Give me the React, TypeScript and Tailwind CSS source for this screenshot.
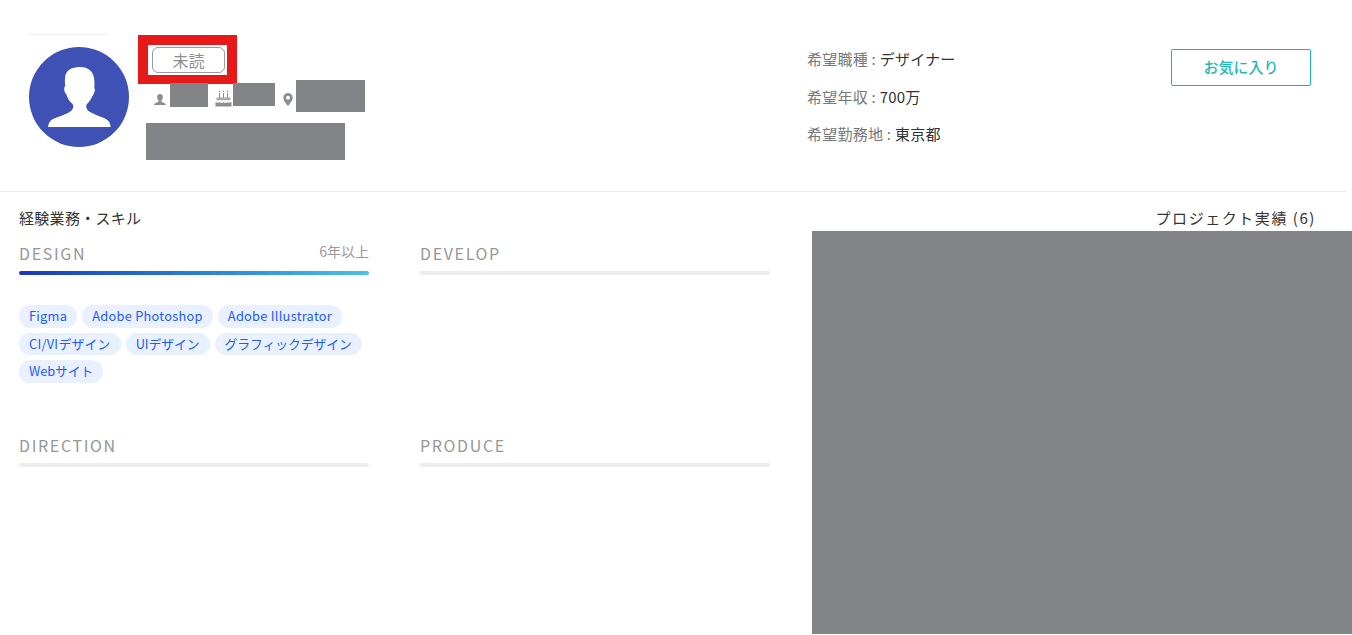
const font = '[font-family:"Noto_Sans_CJK_JP","Noto_Sans",sans-serif]';

function UserIcon() {
  return (
    <svg viewBox="0 0 14 14" className="h-[14px] w-[14px]" fill="#8d8e90">
      <path d="M7 1c1.800 0 2.900 1.300 2.900 3.100 0 1.400-.6 2.700-1.400 3.400v1.200c.8.6 4.300 1 4.500 3.300H1c.2-2.300 3.700-2.700 4.500-3.300V7.500C4.700 6.800 4.100 5.500 4.100 4.100 4.100 2.300 5.200 1 7 1z" />
    </svg>
  );
}

function CakeIcon() {
  return (
    <svg viewBox="0 0 17 17" className="h-[17px] w-[17px]" fill="#8d8e90">
      <path d="M4.500 0l.7 1.400-.7 1-.7-1zM8.500 0l.7 1.400-.7 1-.7-1zM12.500 0l.7 1.400-.7 1-.7-1z" />
      <path d="M4 3h1v5H4zM8 3h1v5H8zM12 3h1v5h-1z" />
      <path d="M1.500 7.500h14v2.300c-1.200 1-2.300 1-3.500 0-1.200 1-2.300 1-3.500 0-1.200 1-2.300 1-3.500 0-1.200 1-2.300 1-3.500 0z" opacity=".75" />
      <path d="M.5 12c1.600.9 3.200.9 4 .2 1.300.9 2.700.9 4 0 1.300.9 2.700.9 4 0 .8.700 2.400.7 4-.2v4.500H.5z" />
    </svg>
  );
}

function PinIcon() {
  return (
    <svg viewBox="0 0 12 16" className="h-[15px] w-3" fill="#8d8e90">
      <path
        fillRule="evenodd"
        d="M6 1a5 5 0 0 1 5 5c0 3.200-3.300 6.700-5 9-1.700-2.300-5-5.800-5-9a5 5 0 0 1 5-5zm0 3a2 2 0 1 0 0 4 2 2 0 0 0 0-4z"
      />
    </svg>
  );
}

function AvatarIcon() {
  return (
    <svg viewBox="0 0 100 100" className="h-[100px] w-[100px]">
      <circle cx="50" cy="50" r="50" fill="#3f51b5" />
      <path
        fill="#fff"
        d="M51 20c8 0 13 4 14 11 .7 4 .6 7 .2 10 1 .8 1 3-.2 5-.5 1.600-1 2.800-2 3.600-1 3-2.500 5.400-5 7.400-1.500 1.600-1 4.600 1 6.400 5 4.400 15 6 20 10 1.600 1.600 2.300 4 2.700 6.600H19c.4-3 1.500-5.400 3.500-7 5-3.600 15-5 20-9.600 2-1.800 2.500-4.800 1-6.400-3-2.500-5-6-6.200-9.800-1.300-1-2.100-3-2.100-5.400 0-1.400.5-2.400 1.100-3-.5-3-.6-5.600-.1-8.800C36.400 24 42 20 51 20z"
      />
    </svg>
  );
}

function SkillHead({ label, note, active }: { label: string; note?: string; active?: boolean }) {
  return (
    <div>
      <div className="flex h-[21px] items-start justify-between">
        <span className="text-[16px] leading-[21px] tracking-[1.65px] text-[#96979a]">{label}</span>
        {note && <span className="mt-[-2px] text-sm leading-[20px] text-[#9b9b9b]">{note}</span>}
      </div>
      <div
        className={`mt-[7px] h-1 rounded-full ${
          active ? 'bg-gradient-to-r from-[#1e35bd] to-[#4cc1e6]' : 'bg-[#ededed]'
        }`}
      />
    </div>
  );
}

function Tag({ children, tight }: { children: string; tight?: boolean }) {
  return (
    <span
      className={`rounded-full bg-[#e9f0fe] px-[10px] text-[12.8px] leading-[22.5px] text-[#1f5bff] ${
        tight ? 'tracking-[-0.05px]' : 'tracking-[0.27px]'
      }`}
    >
      {children}
    </span>
  );
}

export default function App() {
  return (
    <div className={`${font} h-[635px] w-[1352px] overflow-hidden bg-white text-[#333]`}>
      <header className="flex h-[192px] w-[1347px] border-b border-[#ebebeb] pl-[29px]">
        <div className="w-[109px] pt-[34px]">
          <div className="h-px w-[78px] bg-[#f0f0f0]" />
          <div className="mt-3">
            <AvatarIcon />
          </div>
        </div>

        <div className="w-[669px] pt-[35px]">
          <div className="flex h-[49px] w-[99px] items-center border-[10px] border-b-[9px] border-[#e71a1a] bg-white pl-1">
            <span className="flex h-[26px] w-[73px] shrink-0 items-center justify-center rounded-md border border-[#9a9a9a] text-base text-[#8f8f8f]">
              未読
            </span>
          </div>
          <div className="ml-[15px] mt-[-1px] flex items-start">
            <span className="mt-[10px]"><UserIcon /></span>
            <span className="ml-[3px] h-6 w-[38px] bg-[#838488]" />
            <span className="ml-[7px] mt-[7px]"><CakeIcon /></span>
            <span className="ml-px h-[23px] w-[42px] bg-[#838488]" />
            <span className="ml-[7px] mt-[9px]"><PinIcon /></span>
            <span className="ml-[2px] mt-[-3px] h-8 w-[69px] bg-[#838488]" />
          </div>
          <div className="ml-2 mt-[11px] h-[37px] w-[199px] bg-[#838488]" />
        </div>

        <div className="flex w-[364px] flex-col gap-[15px] pt-[48px] text-[15px] leading-[22.5px] tracking-[0.25px]">
          <p><span className="text-[#77787a]">希望職種 : </span>デザイナー</p>
          <p><span className="text-[#77787a]">希望年収 : </span>700万</p>
          <p><span className="text-[#77787a]">希望勤務地 : </span>東京都</p>
        </div>

        <div className="pt-[49px]">
          <button className="h-[37px] w-[140px] rounded-[2px] border border-[#17b5b5] text-[15px] font-medium text-[#1fb9b9]">
            お気に入り
          </button>
        </div>
      </header>

      <div className="flex">
        <div className="w-[812px] pl-[19px]">
          <h2 className="mt-[15px] text-[15px] leading-[21px] tracking-[0.3px] text-[#333]">経験業務・スキル</h2>
          <div className="mt-[15px] grid w-[751px] grid-cols-[350px_350px] gap-x-[51px]">
            <div className="h-[192px]">
              <SkillHead label="DESIGN" note="6年以上" active />
              <div className="mt-[30px] flex flex-wrap gap-[5px]">
                <Tag>Figma</Tag>
                <Tag>Adobe Photoshop</Tag>
                <Tag>Adobe Illustrator</Tag>
                <Tag>CI/VIデザイン</Tag>
                <Tag tight>UIデザイン</Tag>
                <Tag tight>グラフィックデザイン</Tag>
                <Tag tight>Webサイト</Tag>
              </div>
            </div>
            <div className="h-[192px]">
              <SkillHead label="DEVELOP" />
            </div>
            <SkillHead label="DIRECTION" />
            <SkillHead label="PRODUCE" />
          </div>
        </div>

        <div className="flex-1">
          <div className="mt-[15px] h-[24px] pr-[36px] text-right text-[15px] leading-[22px] tracking-[1.55px] text-[#333]">
            プロジェクト実績 (6)
          </div>
          <div className="h-[403px] bg-[#838488]" />
        </div>
      </div>
    </div>
  );
}
